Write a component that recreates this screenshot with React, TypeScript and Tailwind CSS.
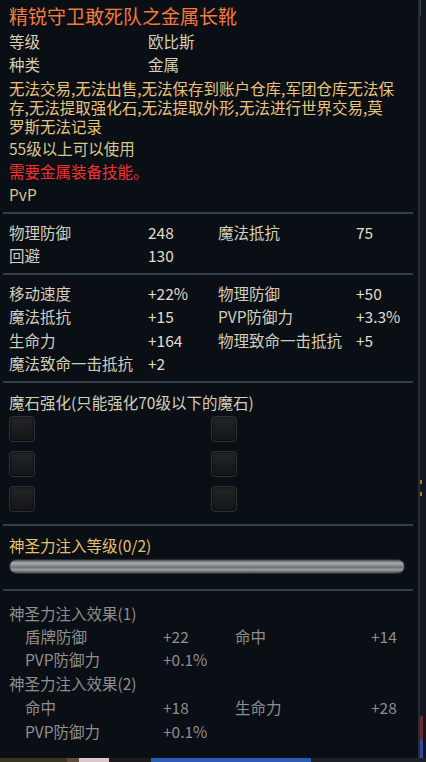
import React from "react";

const font = { fontFamily: '"Noto Sans CJK SC", "Noto Sans", sans-serif' };

function Divider() {
  return <div className="ml-[3px] w-[410px] h-[2px] bg-[#343c48]" />;
}

function StatRow({ a, b, c, d }: { a: string; b: string; c?: string; d?: string }) {
  return (
    <div className="flex h-[23.3px] items-center pl-[9px] text-[15.5px] text-[#d4cfbb]">
      <span className="w-[139px] shrink-0 whitespace-nowrap">{a}</span>
      <span className="w-[70px] shrink-0 text-[#e2decb]">{b}</span>
      <span className="w-[138px] shrink-0 whitespace-nowrap">{c}</span>
      <span className="text-[#e2decb]">{d}</span>
    </div>
  );
}

function EffectRow({ a, b, c, d }: { a: string; b: string; c?: string; d?: string }) {
  return (
    <div className="flex h-[23.8px] items-center pl-[25px] text-[15.5px] text-[#8f8f8f]">
      <span className="w-[138px] shrink-0">{a}</span>
      <span className="w-[72px] shrink-0">{b}</span>
      <span className="w-[136px] shrink-0">{c}</span>
      <span>{d}</span>
    </div>
  );
}

function Slot() {
  return (
    <div className="w-[26px] h-[26px] rounded-[4px] border border-[#2c3138] bg-gradient-to-b from-[#242526] to-[#141516] shadow-[inset_0_0_3px_rgba(0,0,0,0.9)]" />
  );
}

export default function App() {
  const slots = [0, 1, 2];
  return (
    <div className="w-[426px] h-[762px] bg-[#12171d] overflow-hidden flex flex-col" style={font}>
      <div className="flex h-[758px]">
        <div className="w-[420px] h-full bg-[#0a0e15] border-r-2 border-[#262d36] flex flex-col">
          <div className="pt-[4px] pl-[9px] h-[30.5px] text-[19px] leading-[24px] text-[#f47b3d] whitespace-nowrap">
            精锐守卫敢死队之金属长靴
          </div>
          <div className="flex h-[23px] items-center pl-[9px] text-[15.5px] text-[#d6d0b4]">
            <span className="w-[139px]">等级</span>
            <span>欧比斯</span>
          </div>
          <div className="flex h-[23px] items-center pl-[9px] text-[15.5px] text-[#d6d0b4]">
            <span className="w-[139px]">种类</span>
            <span>金属</span>
          </div>
          <div className="pt-[2px] pl-[9px] text-[15.5px] leading-[19px] text-[#e8c47c] whitespace-nowrap">
            <p className="h-[19px]">无法交易,无法出售,无法保存到账户仓库,军团仓库无法保</p>
            <p className="h-[19px]">存,无法提取强化石,无法提取外形,无法进行世界交易,莫</p>
            <p className="h-[19px]">罗斯无法记录</p>
          </div>
          <div className="mt-[2px] pl-[9px] h-[23px] flex items-center text-[15.5px] text-[#dac78f]">55级以上可以使用</div>
          <div className="pl-[9px] h-[22px] flex items-center text-[15.5px] text-[#fb2e2e]">需要金属装备技能。</div>
          <div className="pl-[9px] h-[24px] flex items-center text-[15.5px] text-[#dac78f]">PvP</div>
          <div className="h-[5px]" />
          <Divider />
          <div className="h-[7.5px]" />
          <StatRow a="物理防御" b="248" c="魔法抵抗" d="75" />
          <StatRow a="回避" b="130" />
          <div className="h-[5.5px]" />
          <Divider />
          <div className="h-[7px]" />
          <StatRow a="移动速度" b="+22%" c="物理防御" d="+50" />
          <StatRow a="魔法抵抗" b="+15" c="PVP防御力" d="+3.3%" />
          <StatRow a="生命力" b="+164" c="物理致命一击抵抗" d="+5" />
          <StatRow a="魔法致命一击抵抗" b="+2" />
          <div className="h-[6px]" />
          <Divider />
          <div className="pl-[9px] h-[31px] flex items-center pt-[8px] text-[15.5px] text-[#d4cfbb] whitespace-nowrap">
            魔石强化(只能强化70级以下的魔石)
          </div>
          <div className="mt-[2px] pl-[9px] flex flex-col gap-[9px]">
            {slots.map((i) => (
              <div key={i} className="flex">
                <div className="w-[202px]">
                  <Slot />
                </div>
                <Slot />
              </div>
            ))}
          </div>
          <div className="h-[12px]" />
          <Divider />
          <div className="pl-[9px] h-[30px] flex items-center pt-[8px] text-[15.5px] text-[#e8c070]">神圣力注入等级(0/2)</div>
          <div className="mt-[3px] ml-[9px] w-[396px] h-[15px] rounded-full border border-[#2b2d30] bg-[linear-gradient(to_bottom,#4c4d4f_0%,#a9aaab_22%,#8e8f90_42%,#6f7071_55%,#9c9d9e_75%,#505153_100%)]" />
          <div className="h-[15px]" />
          <Divider />
          <div className="pl-[9px] h-[33px] flex items-center pt-[12px] text-[15.5px] text-[#8f8f8f]">神圣力注入效果(1)</div>
          <EffectRow a="盾牌防御" b="+22" c="命中" d="+14" />
          <EffectRow a="PVP防御力" b="+0.1%" />
          <div className="pl-[9px] h-[23.8px] flex items-center text-[15.5px] text-[#8f8f8f]">神圣力注入效果(2)</div>
          <EffectRow a="命中" b="+18" c="生命力" d="+28" />
          <EffectRow a="PVP防御力" b="+0.1%" />
        </div>
        <div className="flex-1 flex flex-col">
          <div className="h-[16px] border-l border-[#3a424c]" />
          <div className="flex-1" />
          <div className="h-[4px] w-[2px] bg-[#a07a3a]" />
          <div className="h-[8px]" />
          <div className="h-[4px] w-[2px] bg-[#a07a3a]" />
          <div className="h-[220px]" />
          <div className="h-[24px] w-[3px] bg-[#6a2a30]" />
          <div className="h-[18px] w-[3px] bg-[#2a4c9a]" />
        </div>
      </div>
      <div className="flex h-[4px]">
        <div className="w-[67px] bg-[#3b3322]" />
        <div className="w-[12px] bg-[#5a4a40]" />
        <div className="w-[30px] bg-[#d8c8c8]" />
        <div className="w-[42px] bg-[#1c1a1c]" />
        <div className="w-[160px] bg-[#2b5cb8]" />
        <div className="flex-1 bg-[#1e2228]" />
      </div>
    </div>
  );
}
